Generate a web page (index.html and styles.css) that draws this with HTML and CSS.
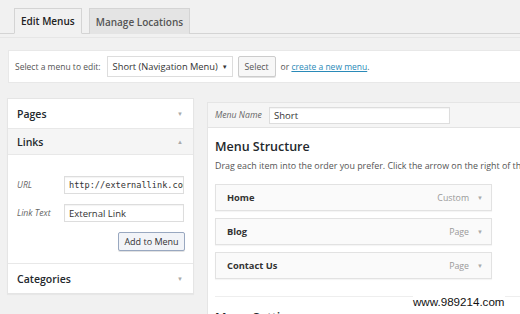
FILE: index.html
```html
<!DOCTYPE html>
<html>
<head>
<meta charset="utf-8">
<link rel="stylesheet" href="styles.css">
</head>
<body>
<div class="page">
  <div class="tabs">
    <span class="tab active">Edit Menus</span>
    <span class="tab">Manage Locations</span>
  </div>
  <div class="tabs-line2"></div>
  <div class="manage">
    <span class="manage-label">Select a menu to edit:</span>
    <span class="select">Short (Navigation Menu)<span class="sel-arrow">&#9660;</span></span>
    <span class="btn">Select</span>
    <span class="or">or <a class="link">create a new menu</a>.</span>
  </div>
  <div class="columns">
    <div class="side">
      <div class="acc-head">Pages<span class="caret">&#9660;</span></div>
      <div class="acc-head open">Links<span class="caret">&#9650;</span></div>
      <div class="acc-body">
        <div class="field">
          <span class="flabel">URL</span>
          <span class="input mono">http://externallink.com</span>
        </div>
        <div class="field">
          <span class="flabel">Link Text</span>
          <span class="input">External Link</span>
        </div>
        <div class="actions"><span class="btn add">Add to Menu</span></div>
      </div>
      <div class="acc-head last">Categories<span class="caret">&#9660;</span></div>
    </div>
    <div class="main">
      <div class="main-head">
        <span class="flabel">Menu Name</span>
        <span class="input name">Short</span>
      </div>
      <div class="main-body">
        <h3 class="title">Menu Structure</h3>
        <p class="desc">Drag each item into the order you prefer. Click the arrow on the right of the item to reveal additional configuration options.</p>
        <div class="items">
          <div class="item"><span class="item-title">Home</span><span class="item-type">Custom</span><span class="caret">&#9660;</span></div>
          <div class="item"><span class="item-title">Blog</span><span class="item-type">Page</span><span class="caret">&#9660;</span></div>
          <div class="item"><span class="item-title">Contact Us</span><span class="item-type">Page</span><span class="caret">&#9660;</span></div>
        </div>
        <div class="settings">
          <h3 class="title">Menu Settings</h3>
        </div>
      </div>
    </div>
  </div>
  <div class="watermark">www.989214.com</div>
</div>
</body>
</html>
```

FILE: styles.css
```css
html, body {
  margin: 0;
  padding: 0;
}
body {
  background: #f1f1f1;
  font-family: "Open Sans", "Noto Sans", sans-serif;
  color: #444;
  width: 520px;
  height: 314px;
  overflow: hidden;
}
.page {
  position: relative;
  width: 520px;
  height: 314px;
  overflow: hidden;
}
.tabs {
  margin-top: 8px;
  padding-left: 14px;
  display: flex;
  gap: 7px;
  border-bottom: 1px solid #d4d4d4;
  height: 25px;
  align-items: flex-end;
}
.tab {
  box-sizing: border-box;
  height: 26px;
  margin-bottom: -1px;
  padding: 0 6px;
  display: flex;
  align-items: center;
  font-size: 10px;
  font-weight: 600;
  color: #555;
  background: #e4e4e4;
  border: 1px solid #d4d4d4;
  border-bottom: none;
}
.tab.active {
  background: #f1f1f1;
  color: #222;
  border-bottom: 1px solid #f1f1f1;
}
.tabs-line2 {
  height: 0;
  margin-top: 3px;
  border-top: 1px solid #e6e6e6;
}
.manage {
  margin: 12px 0 0 8px;
  height: 33px;
  box-sizing: border-box;
  background: #fff;
  border: 1px solid #e8e8e8;
  border-right: none;
  display: flex;
  align-items: center;
  padding-left: 6px;
  font-size: 8.5px;
  color: #555;
}
.manage-label {
  margin-right: 6px;
}
.select {
  box-sizing: border-box;
  width: 126px;
  height: 21px;
  border: 1px solid #ddd;
  display: flex;
  align-items: center;
  padding-left: 5px;
  font-size: 9.3px;
  color: #333;
  position: relative;
}
.sel-arrow {
  font-size: 6px;
  position: absolute;
  right: 4px;
  top: 6px;
  color: #333;
}
.btn {
  box-sizing: border-box;
  height: 21px;
  border: 1px solid #ccc;
  border-radius: 2px;
  background: #f7f7f7;
  display: inline-flex;
  align-items: center;
  padding: 0 7px;
  font-size: 8.7px;
  color: #555;
  box-shadow: 0 1px 0 #e2e2e2;
}
.manage .btn {
  margin-left: 5px;
  width: 38px;
  justify-content: center;
  padding: 0;
}
.or {
  margin-left: 5px;
}
.link {
  color: #2a8ab8;
  text-decoration: underline;
}
.columns {
  display: flex;
  align-items: flex-start;
  gap: 13px;
  padding-left: 7px;
  margin-top: 15px;
}
.side {
  width: 187px;
  flex: none;
  background: #fff;
  border: 1px solid #e5e5e5;
  box-sizing: border-box;
  box-shadow: 0 1px 1px rgba(0,0,0,0.04);
}
.acc-head {
  height: 30px;
  box-sizing: border-box;
  display: flex;
  align-items: center;
  justify-content: space-between;
  padding: 0 10px 0 9px;
  font-size: 10.5px;
  font-weight: 600;
  color: #23282d;
  border-bottom: 1px solid #e8e8e8;
}
.acc-head.open {
  background: #f5f5f5;
  height: 26px;
}
.acc-head.last {
  border-bottom: none;
  height: 29px;
}
.caret {
  font-size: 6px;
  color: #aaa;
}
.acc-body {
  padding: 21px 8px 12px 9px;
  border-bottom: 1px solid #e8e8e8;
}
.field {
  display: flex;
  align-items: center;
  margin-bottom: 10px;
}
.flabel {
  font-style: italic;
  font-size: 8.7px;
  color: #666;
  width: 47px;
  flex: none;
}
.input {
  box-sizing: border-box;
  width: 120px;
  height: 18px;
  border: 1px solid #ddd;
  display: flex;
  align-items: center;
  padding-left: 4px;
  font-size: 9.5px;
  color: #333;
  overflow: hidden;
  white-space: nowrap;
  box-shadow: inset 0 1px 1px rgba(0,0,0,0.05);
}
.input.mono {
  font-family: "DejaVu Sans Mono", "Liberation Mono", monospace;
  font-size: 8.6px;
}
.actions {
  display: flex;
  justify-content: flex-end;
  margin-top: 0;
}
.btn.add {
  height: 19px;
  width: 67px;
  padding: 0;
  justify-content: center;
  border-color: #99a8c0;
  background: #f2f4f8;
  color: #333;
  font-size: 9px;
}
.main {
  flex: none;
  width: 330px;
  margin-top: 4px;
  background: #fff;
  border: 1px solid #e5e5e5;
  border-right: none;
  box-sizing: border-box;
}
.main-head {
  height: 25px;
  box-sizing: border-box;
  background: #f5f5f5;
  border-bottom: 1px solid #e3e3e3;
  display: flex;
  align-items: center;
  padding-left: 7px;
}
.main-head .flabel {
  width: 54px;
}
.input.name {
  width: 181px;
  height: 17px;
  background: #fff;
}
.main-body {
  padding: 10px 0 0 7px;
}
.title {
  margin: 0;
  font-size: 12.5px;
  font-weight: 600;
  color: #23282d;
  line-height: 18px;
}
.desc {
  margin: 4px 0 0;
  font-size: 8.9px;
  white-space: nowrap;
  color: #555;
  line-height: 12px;
}
.items {
  margin-top: 12px;
  display: flex;
  flex-direction: column;
  gap: 7px;
  width: 277px;
}
.item {
  box-sizing: border-box;
  height: 27px;
  border: 1px solid #e2e2e2;
  background: #fafafa;
  display: flex;
  align-items: center;
  padding: 0 8px 0 11px;
  box-shadow: 0 1px 1px rgba(0,0,0,0.04);
}
.item-title {
  font-size: 9.3px;
  font-weight: 700;
  color: #333;
  flex: 1;
}
.item-type {
  font-size: 8.8px;
  color: #999;
  margin-right: 8px;
}
.settings {
  margin-top: 17px;
  border-top: 1px solid #eee;
  padding-top: 12px;
}
.watermark {
  position: absolute;
  left: 413px;
  top: 295px;
  font-family: "Liberation Sans", Arial, sans-serif;
  font-size: 11.6px;
  color: #111;
  background: #fff;
  line-height: 14px;
}
```
